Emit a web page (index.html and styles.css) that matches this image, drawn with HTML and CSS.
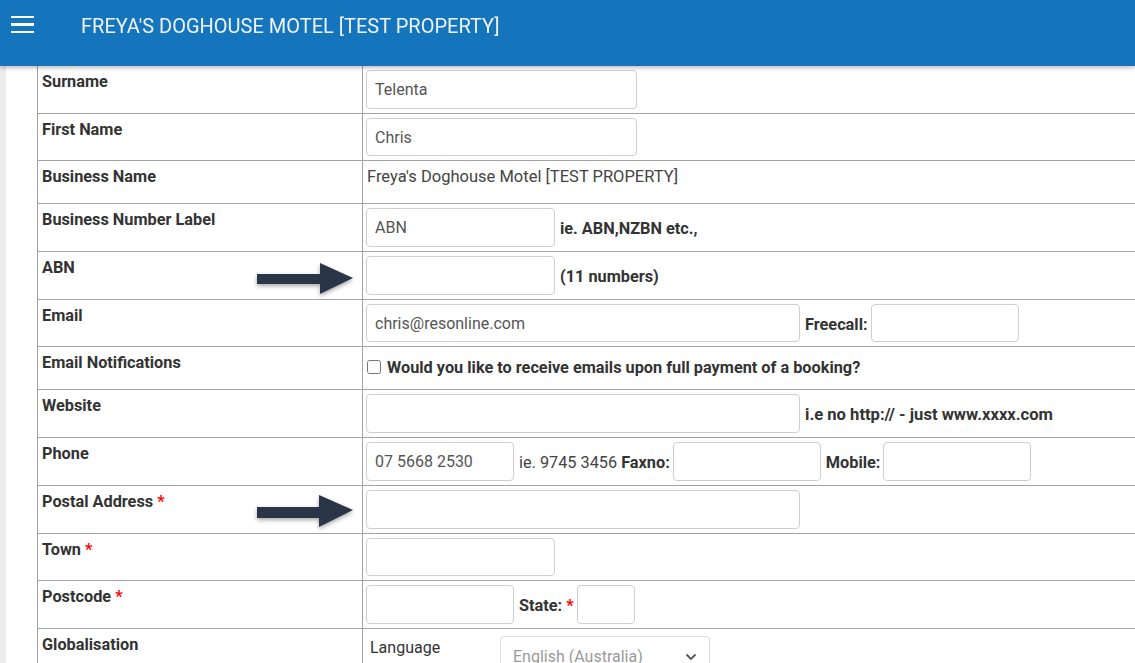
FILE: index.html
```html
<!DOCTYPE html>
<html>
<head>
<meta charset="utf-8">
<link rel="stylesheet" href="styles.css">
</head>
<body>
<header class="topbar">
  <div class="burger"><span></span><span></span><span></span></div>
  <div class="title">FREYA'S DOGHOUSE MOTEL [TEST PROPERTY]</div>
</header>
<main class="page">
  <table class="form">
    <tr class="row">
      <td class="lbl">Surname</td>
      <td class="val"><input class="inp w270" type="text" value="Telenta"></td>
    </tr>
    <tr class="row">
      <td class="lbl">First Name</td>
      <td class="val"><input class="inp w270" type="text" value="Chris"></td>
    </tr>
    <tr class="row short">
      <td class="lbl">Business Name</td>
      <td class="val"><div class="plain">Freya's Doghouse Motel [TEST PROPERTY]</div></td>
    </tr>
    <tr class="row">
      <td class="lbl">Business Number Label</td>
      <td class="val"><div class="line"><input class="inp w188" type="text" value="ABN"><b class="hint">ie. ABN,NZBN etc.,</b></div></td>
    </tr>
    <tr class="row">
      <td class="lbl arrowcell">ABN
        <svg class="arrow" width="110" height="44" viewBox="0 0 110 44"><defs><filter id="sh" x="-20%" y="-40%" width="140%" height="190%"><feDropShadow dx="0" dy="2" stdDeviation="2" flood-color="#000" flood-opacity="0.35"/></filter></defs><path d="M6 19 L69 19 L69 8 L102 23 L69 39 L69 29 L6 29 Z" fill="#2b3447" filter="url(#sh)"/></svg>
      </td>
      <td class="val"><div class="line"><input class="inp w188" type="text" value=""><b class="hint">(11 numbers)</b></div></td>
    </tr>
    <tr class="row">
      <td class="lbl">Email</td>
      <td class="val"><div class="line"><input class="inp w433" type="text" value="chris@resonline.com"><b class="hint">Freecall:</b><input class="inp w147 gap3" type="text" value=""></div></td>
    </tr>
    <tr class="row short2">
      <td class="lbl">Email Notifications</td>
      <td class="val"><div class="checkline"><input class="chk" type="checkbox"><b class="chktxt">Would you like to receive emails upon full payment of a booking?</b></div></td>
    </tr>
    <tr class="row">
      <td class="lbl">Website</td>
      <td class="val"><div class="line"><input class="inp w433" type="text" value=""><b class="hint wide">i.e no http:// - just www.xxxx.com</b></div></td>
    </tr>
    <tr class="row">
      <td class="lbl">Phone</td>
      <td class="val"><div class="line"><input class="inp w147" type="text" value="07 5668 2530"><span class="hint reg">ie. 9745 3456 <b>Faxno:</b></span><input class="inp w147 gap3" type="text" value=""><b class="hint">Mobile:</b><input class="inp w147 gap3" type="text" value=""></div></td>
    </tr>
    <tr class="row">
      <td class="lbl arrowcell">Postal Address <span class="req">*</span>
        <svg class="arrow" width="110" height="44" viewBox="0 0 110 44"><defs><filter id="sh2" x="-20%" y="-40%" width="140%" height="190%"><feDropShadow dx="0" dy="2" stdDeviation="2" flood-color="#000" flood-opacity="0.35"/></filter></defs><path d="M6 18 L68 18 L68 6 L102 21 L68 38 L68 29 L6 29 Z" fill="#2b3447" filter="url(#sh2)"/></svg>
      </td>
      <td class="val"><input class="inp w433" type="text" value=""></td>
    </tr>
    <tr class="row">
      <td class="lbl">Town <span class="req">*</span></td>
      <td class="val"><input class="inp w188" type="text" value=""></td>
    </tr>
    <tr class="row">
      <td class="lbl">Postcode <span class="req">*</span></td>
      <td class="val"><div class="line"><input class="inp w147" type="text" value=""><b class="hint">State: <span class="req">*</span></b><input class="inp w57 gap3" type="text" value=""></div></td>
    </tr>
    <tr class="row">
      <td class="lbl">Globalisation</td>
      <td class="val">
        <div class="glob">
          <div class="globlbl">Language</div>
          <div class="sel"><span>English (Australia)</span>
            <svg class="chev" width="12" height="8" viewBox="0 0 12 8"><path d="M1.5 1.5 L6 6 L10.5 1.5" fill="none" stroke="#555" stroke-width="1.8"/></svg>
          </div>
        </div>
      </td>
    </tr>
  </table>
</main>
</body>
</html>
```

FILE: styles.css
```css
html, body {
  margin: 0;
  padding: 0;
  background: #fff;
  font-family: Roboto, "Liberation Sans", Arial, sans-serif;
  overflow: hidden;
}

.topbar {
  position: fixed;
  top: 0;
  left: 0;
  right: 0;
  height: 66px;
  background: #1474bc;
  display: flex;
  align-items: flex-start;
  box-shadow: 0 2px 4px rgba(0, 0, 0, 0.25);
  z-index: 10;
}

.burger {
  width: 23px;
  margin: 16px 0 0 11px;
  display: flex;
  flex-direction: column;
  gap: 5px;
}

.burger span {
  display: block;
  height: 2.3px;
  background: #fff;
}

.title {
  margin: 14px 0 0 47px;
  color: #eef3f9;
  font-size: 20px;
  font-weight: 400;
  line-height: 24px;
}

.page {
  border-left: 6px solid #ececec;
  padding-left: 31px;
  padding-top: 65px;
  min-height: 663px;
  box-sizing: border-box;
}

.form {
  border-collapse: collapse;
  width: 1200px;
}

.form td {
  border: 1px solid #a3a3a3;
  vertical-align: top;
  padding: 4px 4px 4px 3px;
  height: 38.7px;
}

.form tr.short td { height: 34px; }
.form tr.short2 td { height: 34px; }

.lbl {
  width: 316px;
  font-size: 16.3px;
  font-weight: 700;
  color: #333;
  line-height: 23px;
  padding-left: 4px !important;
}

.arrowcell {
  position: relative;
}

.arrow {
  position: absolute;
  left: 213px;
  top: 3px;
}

.req {
  color: #ff0000;
}

.val {
  color: #444;
}

.line {
  display: flex;
  align-items: center;
}

.inp {
  box-sizing: border-box;
  height: 38.7px;
  border: 1px solid #cfcfcf;
  border-radius: 4px;
  padding: 0 8px;
  font-family: Roboto, "Liberation Sans", Arial, sans-serif;
  font-size: 16px;
  color: #555;
  background: #fff;
  margin: 0;
  outline: none;
}

.w270 { width: 271px; }
.w188 { width: 189px; }
.w433 { width: 434px; }
.w147 { width: 148px; }
.w57 { width: 58px; }
.gap3 { margin-left: 3px; }

.hint {
  font-size: 16.3px;
  font-weight: 700;
  color: #333;
  margin-left: 5px;
  white-space: nowrap;
  padding-top: 2px;
}

.hint.wide {
  font-size: 16.6px;
}

.hint.reg {
  font-weight: 400;
  font-size: 16.3px;
  color: #444;
}

.hint.reg b {
  font-size: 16.3px;
  font-weight: 700;
  color: #333;
}

.plain {
  font-size: 16.5px;
  line-height: 24px;
  color: #444;
  padding-left: 1px;
}

.checkline {
  display: flex;
  align-items: center;
  padding-top: 6px;
}

.chk {
  width: 14px;
  height: 14px;
  margin: 0 6px 0 1px;
}

.chktxt {
  font-size: 16.3px;
  font-weight: 700;
  color: #333;
  padding-top: 1px;
}

.glob {
  display: flex;
  align-items: flex-start;
}

.globlbl {
  width: 130px;
  font-size: 16px;
  color: #333;
  padding: 4px 0 0 4px;
  line-height: 22px;
}

.sel {
  box-sizing: border-box;
  width: 210px;
  height: 38px;
  margin-top: 3px;
  border: 1px solid #dedede;
  border-radius: 4px;
  display: flex;
  align-items: center;
  justify-content: space-between;
  padding: 4px 12px 0 12px;
  color: #9a9a9a;
  font-size: 16px;
  background: #fff;
}

.chev {
  flex: none;
}
```
